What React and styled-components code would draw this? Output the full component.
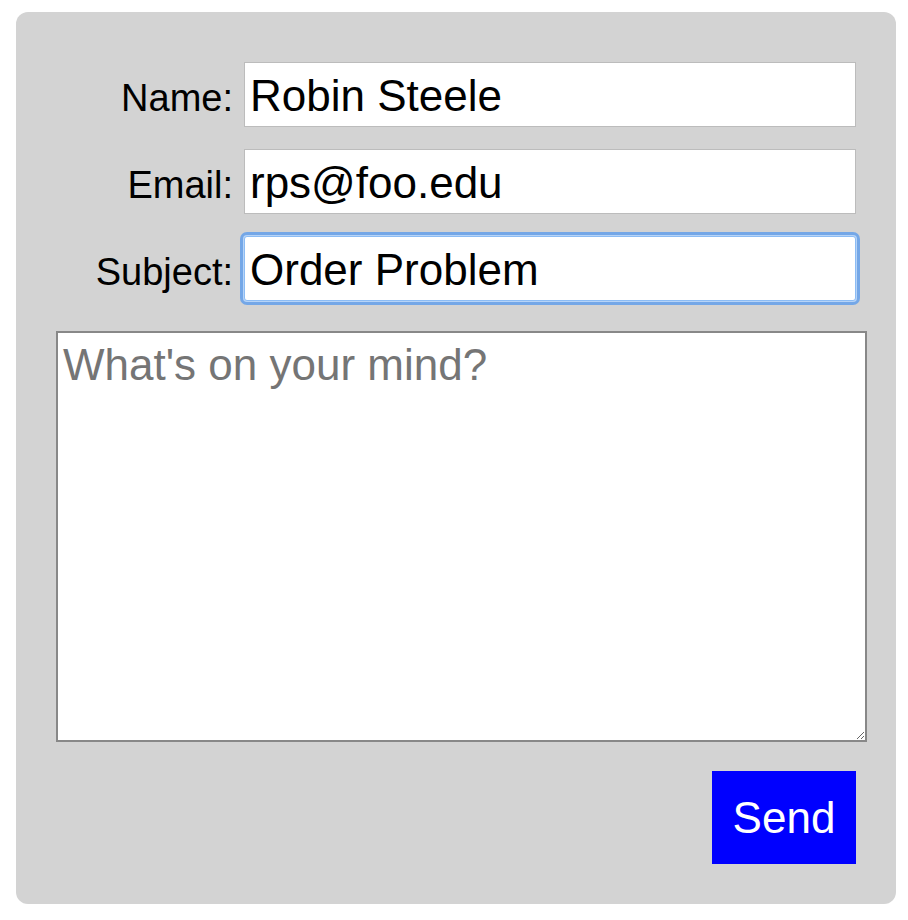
import { useEffect, useRef } from "react";
import styled, { createGlobalStyle } from "styled-components";

const GlobalStyle = createGlobalStyle`
  html, body {
    margin: 0;
    padding: 0;
    background: #fff;
  }
  body {
    font-family: "Liberation Sans", Arial, Helvetica, sans-serif;
  }
`;

const Card = styled.form`
  box-sizing: border-box;
  width: 880px;
  margin: 12px 0 16px 16px;
  padding: 50px 29px 40px 40px;
  background: #d3d3d3;
  border-radius: 12px;
`;

const Fields = styled.div`
  display: grid;
  grid-template-columns: 177px 612px;
  column-gap: 11px;
  row-gap: 22px;
  align-items: baseline;
`;

const Label = styled.label`
  justify-self: end;
  font-size: 38px;
  color: #000;
`;

const TextInput = styled.input`
  box-sizing: border-box;
  width: 612px;
  height: 65px;
  margin: 0;
  padding: 7px 5px 5px;
  border: 1px solid #bcbcbc;
  border-radius: 0;
  background: #fff;
  font-family: "Liberation Sans", Arial, sans-serif;
  font-size: 44px;
  line-height: 51px;
  color: #000;
  caret-color: #000;

  &:focus {
    outline: none;
    border-color: #8cbcf4;
    border-radius: 3px;
    box-shadow: 0 0 0 1px #b7d4f7, 0 0 0 4px rgba(92, 156, 236, 0.8);
  }
`;

const Message = styled.textarea`
  display: block;
  box-sizing: border-box;
  width: 811px;
  height: 411px;
  margin: 30px 0 0 0;
  padding: 7px 5px 5px;
  border: 2px solid #888;
  background: #fff;
  font-family: "Liberation Sans", Arial, sans-serif;
  font-size: 44px;
  line-height: 1.15;
  color: #000;

  &::placeholder {
    color: #757575;
  }
`;

const Actions = styled.div`
  display: flex;
  justify-content: flex-end;
  margin-top: 29px;
  padding-right: 11px;
`;

const SendButton = styled.button`
  width: 144px;
  height: 93px;
  padding: 0;
  border: none;
  border-radius: 0;
  background: #0000ff;
  color: #fff;
  font-family: "Liberation Sans", Arial, sans-serif;
  font-size: 44px;
  cursor: pointer;
`;

export default function App() {
  const subjectRef = useRef(null);

  useEffect(() => {
    const el = subjectRef.current;
    if (el) {
      el.focus();
      el.setSelectionRange(el.value.length, el.value.length);
    }
  }, []);

  return (
    <>
      <GlobalStyle />
      <Card onSubmit={(e) => e.preventDefault()}>
        <Fields>
          <Label htmlFor="name">Name:</Label>
          <TextInput id="name" defaultValue="Robin Steele" />
          <Label htmlFor="email">Email:</Label>
          <TextInput id="email" defaultValue="rps@foo.edu" />
          <Label htmlFor="subject">Subject:</Label>
          <TextInput id="subject" ref={subjectRef} defaultValue="Order Problem" />
        </Fields>
        <Message placeholder="What's on your mind?" />
        <Actions>
          <SendButton type="submit">Send</SendButton>
        </Actions>
      </Card>
    </>
  );
}
